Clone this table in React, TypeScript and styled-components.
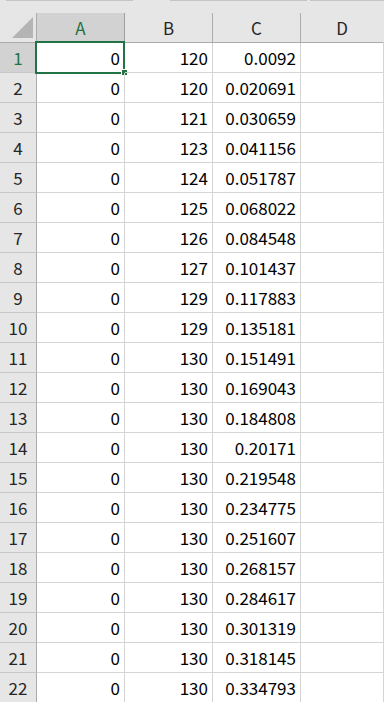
import React from "react";
import styled, { createGlobalStyle } from "styled-components";

const Global = createGlobalStyle`
  html, body { margin: 0; padding: 0; background: #ffffff; overflow: hidden; }
  body { font-family: "Noto Sans CJK JP", "Noto Sans", sans-serif; }
`;

const GREEN = "#217346";
const HEAD_BG = "#e6e6e6";
const HEAD_SEL = "#d2d2d2";
const HEAD_LINE = "#ababab";
const GRID = "#d4d4d4";

const Page = styled.div`
  width: 384px;
  height: 702px;
  overflow: hidden;
  background: #ffffff;
`;

const TopStrip = styled.div`
  height: 13px;
  background: ${HEAD_BG};
  display: flex;
  align-items: flex-start;
`;

const StripSeg = styled.div<{ $w: number; $gap: number }>`
  width: ${(p) => p.$w}px;
  margin-left: ${(p) => p.$gap}px;
  height: 1px;
  background: #c4c4c4;
`;

const Grid = styled.div`
  display: grid;
  grid-template-columns: 37px 88px 88px 88px 1fr;
  grid-auto-rows: 30px;
`;

const Corner = styled.div`
  background: ${HEAD_BG};
  border-right: 1px solid ${HEAD_LINE};
  border-bottom: 1px solid ${HEAD_LINE};
  box-sizing: border-box;
  display: flex;
  align-items: flex-end;
  justify-content: flex-end;
  padding: 0 3px 4px 0;
`;

const Triangle = styled.div`
  width: 0;
  height: 0;
  border-left: 21px solid transparent;
  border-bottom: 21px solid #b4b4b4;
`;

const ColHead = styled.div<{ $sel?: boolean; $last?: boolean }>`
  box-sizing: border-box;
  background: ${(p) => (p.$sel ? HEAD_SEL : HEAD_BG)};
  border-right: 1px solid ${(p) => (p.$last ? "transparent" : p.$sel ? "#9f9f9f" : HEAD_LINE)};
  border-bottom: 1px solid ${(p) => (p.$sel ? GREEN : HEAD_LINE)};
  color: ${(p) => (p.$sel ? GREEN : "#262626")};
  font-size: 17px;
  display: flex;
  align-items: center;
  justify-content: center;
  padding-bottom: 1px;
`;

const RowHead = styled.div<{ $sel?: boolean }>`
  box-sizing: border-box;
  background: ${(p) => (p.$sel ? HEAD_SEL : HEAD_BG)};
  border-right: 1px solid ${HEAD_LINE};
  border-bottom: 1px solid #c8c8c8;
  color: ${(p) => (p.$sel ? GREEN : "#262626")};
  font-size: 17px;
  display: flex;
  align-items: center;
  justify-content: center;
`;

const Cell = styled.div`
  position: relative;
  box-sizing: border-box;
  border-right: 1px solid ${GRID};
  border-bottom: 1px solid ${GRID};
  color: #000000;
  font-size: 17px;
  display: flex;
  align-items: center;
  justify-content: flex-end;
  padding-right: 4px;
`;

const Selection = styled.div`
  position: absolute;
  left: -2px;
  top: -2px;
  width: 90px;
  height: 33px;
  box-sizing: border-box;
  border: 2px solid ${GREEN};
  pointer-events: none;
`;

const FillHandle = styled.div`
  position: absolute;
  left: 84px;
  top: 26px;
  width: 5px;
  height: 5px;
  background: ${GREEN};
  border: 1px solid #ffffff;
`;

const B = [120, 120, 121, 123, 124, 125, 126, 127, 129, 129, 130, 130, 130, 130, 130, 130, 130, 130, 130, 130, 130, 130];
const C = [
  "0.0092", "0.020691", "0.030659", "0.041156", "0.051787", "0.068022", "0.084548",
  "0.101437", "0.117883", "0.135181", "0.151491", "0.169043", "0.184808", "0.20171",
  "0.219548", "0.234775", "0.251607", "0.268157", "0.284617", "0.301319", "0.318145", "0.334793",
];

export default function App() {
  return (
    <Page>
      <Global />
      <TopStrip>
        <StripSeg $gap={6} $w={127} />
        <StripSeg $gap={37} $w={137} />
        <StripSeg $gap={3} $w={74} />
      </TopStrip>
      <Grid>
        <Corner>
          <Triangle />
        </Corner>
        <ColHead $sel>A</ColHead>
        <ColHead>B</ColHead>
        <ColHead>C</ColHead>
        <ColHead $last>D</ColHead>
        {C.map((c, i) => (
          <React.Fragment key={i}>
            <RowHead $sel={i === 0}>{i + 1}</RowHead>
            <Cell>
              0
              {i === 0 && (
                <Selection>
                  <FillHandle />
                </Selection>
              )}
            </Cell>
            <Cell>{B[i]}</Cell>
            <Cell>{c}</Cell>
            <Cell />
          </React.Fragment>
        ))}
      </Grid>
    </Page>
  );
}
